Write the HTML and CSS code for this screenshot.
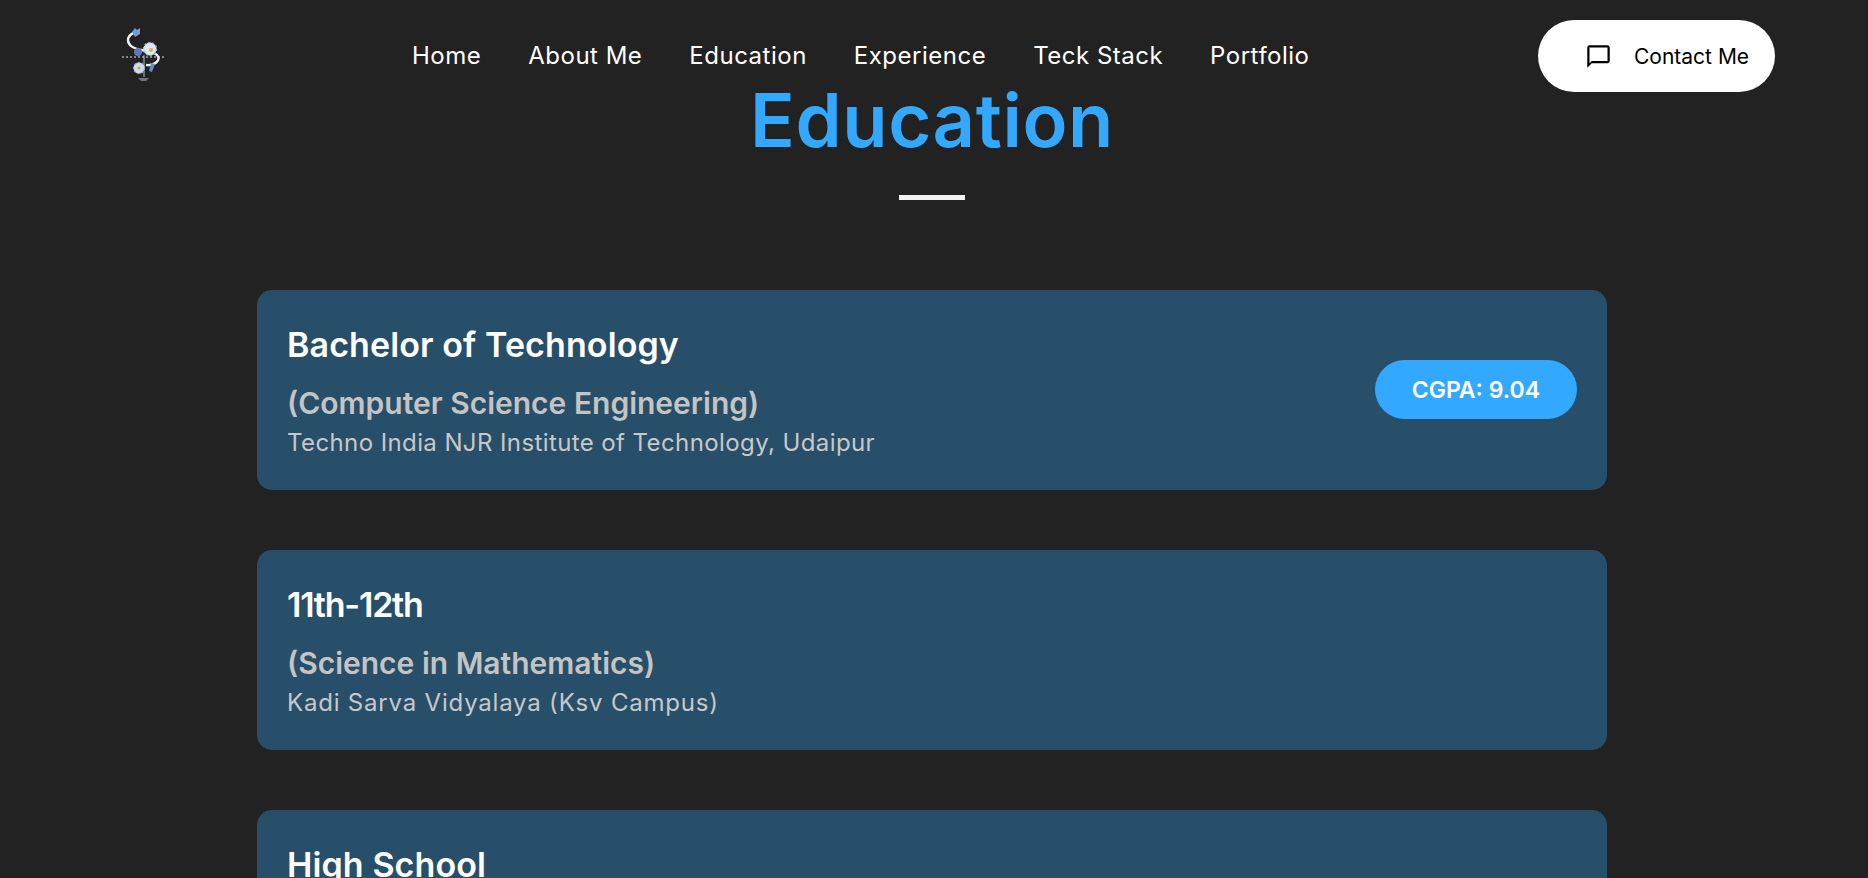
FILE: index.html
```html
<!DOCTYPE html>
<html lang="en">

<head>
    <meta charset="UTF-8">
    <meta name="viewport" content="width=device-width, initial-scale=1.0">
    <title>Education</title>
    <link rel="stylesheet" href="styles.css">
</head>

<body>
    <header class="header">
        <a class="logo" href="#" aria-label="Logo">
            <svg width="50" height="60" viewBox="0 0 50 60">
                <path d="M18 7C9 10 8 16 13 21C18 26 34 25 39 30C44 35 36 41 28 40" fill="none" stroke="#f2f2f2" stroke-width="2.400" />
                <path d="M26 30V52" stroke="#7f8f88" stroke-width="1.500" />
                <path d="M14 7l3-4 2 2 3-2 0 6-5 3z" fill="#6f9fd8" />
                <circle cx="20" cy="27" r="4" fill="#5f78b8" />
                <circle cx="32" cy="24" r="6.500" fill="#dfe8f6" />
                <circle cx="32" cy="24" r="6.500" fill="none" stroke="#8fb0e0" stroke-width="1.500" stroke-dasharray="2 2" />
                <circle cx="33" cy="25" r="2" fill="#e8b030" />
                <circle cx="21" cy="43" r="5.500" fill="#cfdcf0" />
                <circle cx="21" cy="43" r="5.500" fill="none" stroke="#8fa8d0" stroke-width="1.200" stroke-dasharray="2 2" />
                <circle cx="21" cy="43" r="1.600" fill="#d8a838" />
                <path d="M33 38l4 1-3 8-3-1z" fill="#5f8fc8" />
                <path d="M20 53h11l-3 3h-5z" fill="#77707f" />
                <path d="M4 32H46" stroke="#e6e6e6" stroke-width="1.200" stroke-dasharray="2 2" />
            </svg>
        </a>
        <nav class="nav">
            <a href="#">Home</a>
            <a href="#">About Me</a>
            <a href="#">Education</a>
            <a href="#">Experience</a>
            <a href="#">Teck Stack</a>
            <a href="#">Portfolio</a>
        </nav>
        <a class="contact" href="#">
            <svg width="27" height="27" viewBox="0 0 24 24">
                <path d="M20 2H4c-1.100 0-2 .9-2 2v18l4-4h14c1.100 0 2-.9 2-2V4c0-1.100-.9-2-2-2zm0 14H6l-2 2V4h16v12z" fill="#000" />
            </svg>
            <span>Contact Me</span>
        </a>
    </header>

    <main class="education">
        <h1>Education</h1>
        <div class="line"></div>

        <div class="card">
            <div class="info">
                <h2>Bachelor of Technology</h2>
                <h3>(Computer Science Engineering)</h3>
                <p>Techno India NJR Institute of Technology, Udaipur</p>
            </div>
            <span class="score">CGPA: 9.04</span>
        </div>

        <div class="card">
            <div class="info">
                <h2 class="tight">11th-12th</h2>
                <h3>(Science in Mathematics)</h3>
                <p class="wide">Kadi Sarva Vidyalaya (Ksv Campus)</p>
            </div>
        </div>

        <div class="card">
            <div class="info">
                <h2>High School</h2>
            </div>
        </div>
    </main>
</body>

</html>
```

FILE: styles.css
```css
html,
body {
    height: 878px;
    overflow: hidden;
}

body {
    margin: 0;
    background-color: #222222;
    font-family: Inter, "Liberation Sans", sans-serif;
    color: white;
}

a {
    text-decoration: none;
}

.header {
    display: flex;
    align-items: center;
    height: 72px;
    padding: 20px 93px 0 118px;
}

.logo {
    display: flex;
    margin-top: -2px;
}

.nav {
    display: flex;
    gap: 47px;
    margin-left: 244px;
}

.nav a {
    color: white;
    font-size: 24px;
    line-height: 30px;
    letter-spacing: 0.5px;
}

.contact {
    display: flex;
    align-items: center;
    gap: 22px;
    height: 72px;
    margin-left: auto;
    padding-left: 47px;
    box-sizing: border-box;
    width: 237px;
    flex-shrink: 0;
    border-radius: 36px;
    background-color: white;
    color: black;
    font-size: 21px;
}

.education {
    width: 1350px;
    margin-left: 257px;
}

h1 {
    margin: -22px 0 0;
    text-align: center;
    color: #33a8ff;
    font-size: 74px;
    line-height: 100px;
    font-weight: 600;
    letter-spacing: 0.6px;
}

.line {
    width: 66px;
    height: 5px;
    margin: 25px auto 90px;
    background-color: #f2f2f2;
}

.card {
    display: flex;
    align-items: center;
    justify-content: space-between;
    box-sizing: border-box;
    height: 200px;
    margin-bottom: 60px;
    padding: 0 30px;
    border-radius: 15px;
    background-color: #284f69;
}

.info {
    align-self: flex-start;
    padding-top: 32px;
}

h2 {
    margin: 0 0 13px;
    font-size: 34px;
    line-height: 46px;
    font-weight: 600;
    letter-spacing: 0.1px;
}

h2.tight {
    letter-spacing: -1.2px;
}

h3 {
    margin: 0;
    color: #c4c4c4;
    font-size: 30px;
    line-height: 45px;
    font-weight: 600;
}

p {
    margin: 0;
    color: #c8c8c8;
    font-size: 24px;
    line-height: 34px;
    letter-spacing: 0.4px;
}

p.wide {
    letter-spacing: 0.8px;
}

.score {
    padding: 2px 37px 0;
    border-radius: 30px;
    background-color: #33a8ff;
    font-size: 23px;
    line-height: 57px;
    font-weight: 600;
    margin-top: -1px;
}
```
